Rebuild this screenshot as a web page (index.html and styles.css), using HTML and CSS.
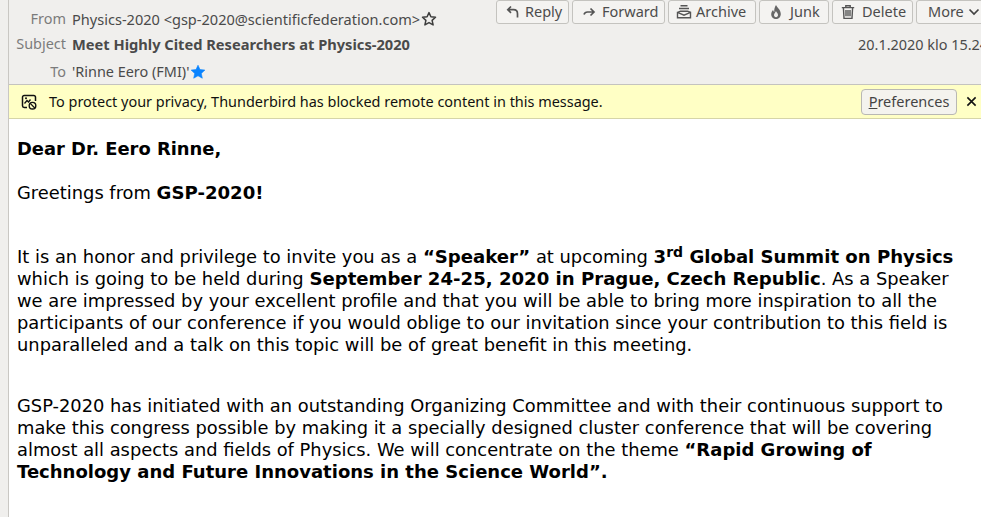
FILE: index.html
```html
<!DOCTYPE html>
<html lang="en">
<head>
<meta charset="utf-8">
<title>Meet Highly Cited Researchers at Physics-2020</title>
<link rel="stylesheet" href="styles.css">
</head>
<body>
<div class="app">
  <div class="rail"></div>
  <div class="main">
    <header class="head">
      <div class="fields">
        <div class="row row-from"><span class="label">From</span><span class="value">Physics-2020 &lt;gsp-2020@scientificfederation.com&gt;</span>
          <svg class="star" viewBox="0 0 16 16"><path d="M8 1.6l1.9 4.2 4.6.5-3.4 3.1 1 4.5L8 11.6l-4.1 2.3 1-4.5-3.4-3.1 4.6-.5z" fill="none" stroke="#3d3d3d" stroke-width="1.5" stroke-linejoin="round"/></svg>
        </div>
        <div class="row row-subject"><span class="label">Subject</span><span class="value strong">Meet Highly Cited Researchers at Physics-2020</span></div>
        <div class="row row-to"><span class="label">To</span><span class="value">'Rinne Eero (FMI)'</span>
          <svg class="star" viewBox="0 0 16 16"><path d="M8 1.2l2 4.4 4.9.5-3.6 3.3 1 4.8L8 11.8l-4.3 2.4 1-4.8L1.100 6.100l4.900-.5z" fill="#0a84ff" stroke="#0a84ff" stroke-width=".6" stroke-linejoin="round"/></svg>
        </div>
      </div>
      <div class="side">
        <div class="buttons">
          <button class="btn b-reply"><svg class="ico" viewBox="0 0 16 16"><path d="M6 2.500L2.800 5.700 6 8.900M3 5.700h5.500c2.600 0 4 1.700 4 4v3.800" fill="none" stroke="#555" stroke-width="1.700"/></svg>Reply</button>
          <button class="btn b-forward"><svg class="ico" viewBox="0 0 16 16"><path d="M9.500 4.500L13 8l-3.500 3.500M12.500 8H6.500C4.500 8 3.500 9 3 10.500" fill="none" stroke="#555" stroke-width="1.700"/></svg>Forward</button>
          <button class="btn b-archive"><svg class="ico" viewBox="0 0 16 16"><path d="M4.500 1.800h7M3 4.500h10M1.500 8.300l3-1.100h7l3 1.100v5.400h-13zM1.500 8.300L8 11.200l6.500-2.900" fill="none" stroke="#555" stroke-width="1.400"/></svg>Archive</button>
          <button class="btn b-junk"><svg class="ico" viewBox="0 0 16 16"><path d="M8 1c.8 2.200 4.800 4.500 4.800 9 0 3-2.200 5-4.800 5s-4.800-2-4.800-4.800c0-1.800.9-3.200 1.900-4.200.2 1 .6 1.600 1.200 2C6 5 6.800 3 8 1z" fill="#666"/><path d="M8 7c.3 1.300 2 2.200 2 4 0 1.300-.9 2.200-2 2.200S6 12.300 6 11c0-1.500 1.500-2.500 2-4z" fill="#f0efed"/></svg>Junk</button>
          <button class="btn b-delete"><svg class="ico" viewBox="0 0 16 16"><path d="M1.800 3.600h12.400M5.800 3.400V1.700h4.400v1.700M3.400 3.800l.6 10.600h8l.6-10.600M6 6v6.300M8 6v6.300M10 6v6.300" fill="none" stroke="#555" stroke-width="1.400"/></svg>Delete</button>
          <button class="btn b-more">More<svg class="chev" viewBox="0 0 12 12"><path d="M1.500 3.500L6 8l4.500-4.500" fill="none" stroke="#444" stroke-width="1.700"/></svg></button>
        </div>
        <div class="date">20.1.2020 klo 15.24</div>
      </div>
    </header>
    <div class="notice">
      <svg class="notice-ico" viewBox="0 0 16 16"><path d="M6 13.500H3.200a1.700 1.700 0 0 1-1.700-1.700V3.200a1.700 1.700 0 0 1 1.700-1.700h9.600a1.700 1.700 0 0 1 1.700 1.700V7" fill="none" stroke="#111" stroke-width="1.500"/><path d="M3.500 9.500l2.500-3 1.500 1.500 2-2.500" fill="none" stroke="#111" stroke-width="1.300"/><circle cx="5" cy="4.300" r="1" fill="#111"/><circle cx="11.500" cy="11.700" r="3.300" fill="none" stroke="#111" stroke-width="1.400"/><path d="M9.200 9.400l4.600 4.600" stroke="#111" stroke-width="1.300"/></svg>
      <span class="notice-text">To protect your privacy, Thunderbird has blocked remote content in this message.</span>
      <button class="prefs"><u>P</u>references</button>
      <svg class="close" viewBox="0 0 12 12"><path d="M1.500 1.500l9 9M10.500 1.500l-9 9" stroke="#111" stroke-width="1.700"/></svg>
    </div>
    <article class="mail">
      <p class="p-dear"><b>Dear Dr. Eero Rinne,</b></p>
      <p class="p-greet">Greetings from <b>GSP-2020!</b></p>
      <p class="p-a">It is an honor and privilege to invite you as a <b>“Speaker”</b> at upcoming <b>3<sup>rd</sup> Global Summit on Physics</b> which is going to be held during <b>September 24-25, 2020 in Prague, Czech Republic</b>. As a Speaker we are impressed by your excellent profile and that you will be able to bring more inspiration to all the participants of our conference if you would oblige to our invitation since your contribution to this field is unparalleled and a talk on this topic will be of great benefit in this meeting.</p>
      <p class="p-b">GSP-2020 has initiated with an outstanding Organizing Committee and with their continuous support to make this congress possible by making it a specially designed cluster conference that will be covering almost all aspects and fields of Physics. We will concentrate on the theme <b>“Rapid Growing of Technology and Future Innovations in the Science World”.</b></p>
    </article>
  </div>
</div>
</body>
</html>
```
FILE: styles.css
```css
html, body { margin: 0; padding: 0; height: 100%; overflow: hidden; background: #fff; }
.app { display: flex; width: 981px; height: 517px; overflow: hidden; }
.rail { flex: none; width: 8px; background: #f0efed; border-right: 1px solid #c9c7c3; }
.main { flex: none; width: 972px; display: flex; flex-direction: column; }

.head { display: flex; justify-content: space-between; height: 84px; flex: none; background: #f0efed; border-bottom: 1px solid #c4c3bf; font-family: "Noto Sans", sans-serif; font-size: 14.450px; color: #4a4a4a; }
.fields { display: flex; flex-direction: column; }
.row { display: flex; align-items: center; height: 25px; }
.row-from { margin-top: 6px; }
.row-to { margin-top: 3px; }
.label { width: 57px; text-align: right; margin-right: 6px; color: #7b7b7b; }
.value { white-space: nowrap; }
.row-from .value { font-size: 14.550px; }
.strong { font-size: 14.650px; font-weight: 700; }
.star { width: 16px; height: 16px; margin-left: 1px; }

.side { display: flex; flex-direction: column; align-items: flex-start; width: 490px; }
.buttons { display: flex; gap: 3px; margin-left: 5px; white-space: nowrap; }
.btn { display: flex; align-items: center; flex: none; height: 24px; margin: 0; padding: 0 0 2px; background: #f4f3f1; border: 1px solid #c4c3bf; border-radius: 3px; font: 14.500px "Noto Sans", sans-serif; color: #4c4c4c; }
.ico { width: 16px; height: 16px; flex: none; margin-top: 2px; }
.b-reply { width: 73px; padding-left: 8px; gap: 4px; }
.b-forward { width: 93px; padding-left: 8px; gap: 5px; }
.b-archive { width: 88px; padding-left: 7px; gap: 4px; }
.b-junk { width: 70px; padding-left: 8px; gap: 6px; }
.b-delete { width: 81px; padding-left: 7px; gap: 6px; }
.b-more { width: 80px; padding-left: 11px; gap: 4px; }
.chev { width: 12px; height: 12px; margin-top: 2px; }
.date { margin: 11px 0 0 367px; white-space: nowrap; color: #4a4a4a; }

.notice { display: flex; align-items: center; flex: none; height: 33px; background: #ffffc5; border-bottom: 1px solid #d6d5a8; font-family: "Noto Sans", sans-serif; font-size: 14.450px; color: #111; padding-left: 12px; }
.notice-ico { width: 16px; height: 16px; flex: none; }
.notice-text { margin: 0 0 1px 12px; white-space: nowrap; }
.prefs { margin-left: auto; width: 96px; height: 26px; padding: 0 0 2px; background: #f4f3ee; border: 1px solid #b9b8b3; border-radius: 4px; font: 14.500px "Noto Sans", sans-serif; color: #444; }
.close { width: 11px; height: 11px; flex: none; margin: 0 4px 0 9px; }

.mail { padding: 19px 0 0 8px; width: 950px; font-family: "DejaVu Sans", sans-serif; font-size: 17.870px; line-height: 22px; color: #000; }
.mail p { margin: 0; }
.mail b { font-size: 18.100px; }
.mail .p-dear b { font-size: 17.900px; }
.mail .p-b b { font-size: 18.020px; }
.mail sup { font-size: 14px; line-height: 0; vertical-align: 6px; }
.p-greet { margin-top: 22px !important; }
.p-a { margin-top: 42px !important; }
.p-b { margin-top: 39px !important; font-size: 17.850px; }
```
